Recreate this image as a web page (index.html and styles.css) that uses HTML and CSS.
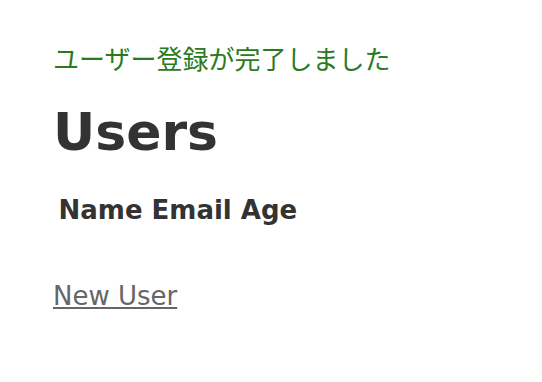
FILE: index.html
```html
<!DOCTYPE html>
<html lang="ja">
<head>
<meta charset="utf-8">
<title>Users</title>
<link rel="stylesheet" href="styles.css">
</head>
<body>
<p class="notice">ユーザー登録が完了しました</p>
<h1 class="title">Users</h1>
<table class="users">
  <thead>
    <tr>
      <th>Name</th>
      <th>Email</th>
      <th>Age</th>
    </tr>
  </thead>
  <tbody></tbody>
</table>
<br>
<a class="new-link" href="#">New User</a>
</body>
</html>
```
FILE: styles.css
```css
html, body {
  background-color: #fff;
}
body {
  margin: 16px 53px;
  color: #333;
  font-family: "DejaVu Sans", Verdana, "Noto Sans CJK JP", sans-serif;
  font-size: 26px;
  line-height: 36px;
}
.notice {
  color: #2b7a1e;
  margin: 26px 0;
  font-family: "DejaVu Sans", "Noto Sans CJK JP", sans-serif;
}
.title {
  font-size: 52px;
  margin: 36px 0 35px;
}
.users th {
  font-size: 26px;
  padding: 5px 3.5px 12px 3.5px;
}
.new-link {
  color: #666;
}
```
